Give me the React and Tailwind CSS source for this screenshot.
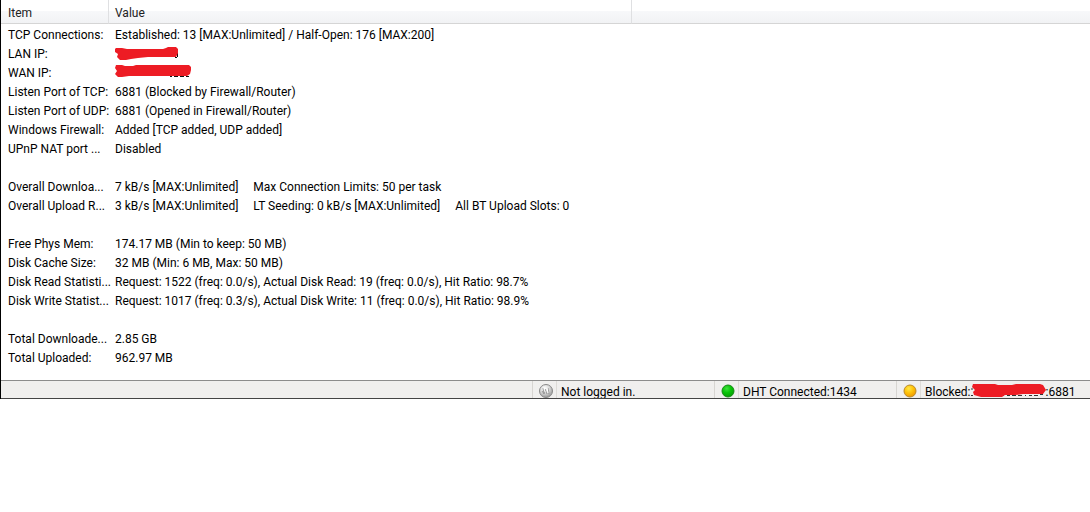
import React from 'react';

// Red marker strokes that cover the addresses
function LanMark() {
  return (
    <svg width="66" height="16" viewBox="0 0 66 16" className="block" role="img" aria-label="hidden address">
      <path d="M62.500 7v4M60 11.500h2" stroke="#111" strokeWidth="1" />
      <path
        d="M1 2h6l5 1h36l3-1 2-1h8l2 2v4l-2 4H33l-10 1-7 1-5 1H5l-3-3 1-3-3-2v-3z"
        fill="#ed1c24"
      />
    </svg>
  );
}

function WanMark() {
  return (
    <svg width="78" height="16" viewBox="0 0 78 16" className="block" role="img" aria-label="hidden address">
      <path d="M55 11.500h2M59 11.500h4M65 11.500h4M71 11.500h3" stroke="#111" strokeWidth="1" />
      <path
        d="M1 0h6l3 1h8l3-1h53l2 2v3l-1 4-3 2H14l-7 1H3l-3-3 2-3-2-3z"
        fill="#ed1c24"
      />
    </svg>
  );
}

function PeerMark() {
  return (
    <svg width="75" height="15" viewBox="0 0 75 15" className="block shrink-0 self-end" role="img" aria-label="hidden address">
      <path
        d="M0 6h2M0 12.500h2M32 12.500h1M36 12.500h3M41 12.500h4M47 12.500h4M54 12.500h1M58 12.500h3M63 12.500h4M69 11.500h3"
        stroke="#333"
        strokeWidth="1"
      />
      <path
        d="M2 1h22l3 1h14l4-1h24l3 1 3 5-3 4H52l-8 1H34l-3 2H10l-7-2-1-3 2-2-3-3z"
        fill="#ed1c24"
      />
    </svg>
  );
}

const groups = [
  [
    ['TCP Connections:', ['Established: 13 [MAX:Unlimited] / Half-Open: 176 [MAX:200]']],
    ['LAN IP:', [<LanMark key="lan" />]],
    ['WAN IP:', [<WanMark key="wan" />]],
    ['Listen Port of TCP:', ['6881 (Blocked by Firewall/Router)']],
    ['Listen Port of UDP:', ['6881 (Opened in Firewall/Router)']],
    ['Windows Firewall:', ['Added [TCP added, UDP added]']],
    ['UPnP NAT port ...', ['Disabled']],
  ],
  [
    ['Overall Downloa...', ['7 kB/s [MAX:Unlimited]', 'Max Connection Limits: 50 per task']],
    ['Overall Upload R...', ['3 kB/s [MAX:Unlimited]', 'LT Seeding: 0 kB/s [MAX:Unlimited]', 'All BT Upload Slots: 0']],
  ],
  [
    ['Free Phys Mem:', ['174.17 MB (Min to keep: 50 MB)']],
    ['Disk Cache Size:', ['32 MB (Min: 6 MB, Max: 50 MB)']],
    ['Disk Read Statisti...', ['Request: 1522 (freq: 0.0/s), Actual Disk Read: 19 (freq: 0.0/s), Hit Ratio: 98.7%']],
    ['Disk Write Statist...', ['Request: 1017 (freq: 0.3/s), Actual Disk Write: 11 (freq: 0.0/s), Hit Ratio: 98.9%']],
  ],
  [
    ['Total Downloade...', ['2.85 GB']],
    ['Total Uploaded:', ['962.97 MB']],
  ],
];

function StatsTable() {
  return (
    <table className="w-full table-fixed border-separate border-spacing-0">
      <colgroup>
        <col className="w-[108px]" />
        <col className="w-[523px]" />
        <col />
      </colgroup>
      <thead>
        <tr className="h-6 bg-linear-to-b from-white from-45% via-[#f7f8fa] via-45% to-[#f1f2f4] text-left text-[#222]">
          <th scope="col" className="border-r border-b border-r-[#dfe0e2] border-b-[#d5d5d5] p-0 pt-[3px] pl-[7px] font-normal">Item</th>
          <th scope="col" className="border-r border-b border-r-[#dfe0e2] border-b-[#d5d5d5] p-0 pt-[3px] pl-[6px] font-normal">Value</th>
          <td className="border-b border-[#d5d5d5]" />
        </tr>
      </thead>
      {groups.map((rows, i) => (
        <tbody key={i}>
          {i > 0 && (
            <tr className="h-[19px]">
              <td colSpan={3} className="p-0" />
            </tr>
          )}
          {rows.map(([label, values]) => (
            <tr key={label} className="h-[19px]">
              <th scope="row" className="p-0 pt-[3px] pl-[7px] text-left font-normal whitespace-nowrap">
                {label}
              </th>
              <td colSpan={2} className="p-0 pt-[3px] pl-[6px] whitespace-nowrap">
                <div className="flex items-center gap-[15px]">
                  {values.map((value, n) => (
                    <span key={n}>{value}</span>
                  ))}
                </div>
              </td>
            </tr>
          ))}
        </tbody>
      ))}
    </table>
  );
}

function StatusLight({ id, radius = 6, light, mid, dark, edge, children }) {
  return (
    <span className="flex w-6 shrink-0 items-end justify-end border-l border-[#d7d5d2] pr-[3px]">
      <svg width="14" height="14" viewBox="0 0 14 14" aria-hidden="true">
        <defs>
          <radialGradient id={id} cx="0.4" cy="0.3" r="0.7">
            <stop offset="0" stopColor={light} />
            <stop offset="0.5" stopColor={mid} />
            <stop offset="1" stopColor={dark} />
          </radialGradient>
        </defs>
        <circle cx="7" cy="7" r={radius} fill={`url(#${id})`} stroke={edge} />
        {children}
      </svg>
    </span>
  );
}

function StatusBar() {
  return (
    <footer className="flex h-[19px] overflow-hidden border-t border-b border-t-[#8c8c8c] border-b-[#444] bg-[#f0efee] leading-[22px]">
      <div className="flex-1" />
      <StatusLight id="account" radius={6.5} light="#ffffff" mid="#dadada" dark="#9c9c9c" edge="#888">
        <path d="M4 4l1 6 1-5 2 5M9 4l1 6M3 7l2 3" stroke="#999" fill="none" />
        <path d="M5 4l1 4M8 4l1 5" stroke="#fff" fill="none" />
      </StatusLight>
      <span className="w-[158px] border-l border-[#dddbd8] pl-1">Not logged in.</span>
      <StatusLight id="dht" light="#3fe03f" mid="#09c509" dark="#07a007" edge="#168a16" />
      <span className="w-[158px] border-l border-[#dddbd8] pl-1">DHT Connected:1434</span>
      <StatusLight id="port" light="#ffe84a" mid="#ffc40a" dark="#f09a00" edge="#b98a2a" />
      <span className="flex w-[170px] border-l border-[#dddbd8] pl-1">
        Blocked:
        <PeerMark />
        :6881
      </span>
    </footer>
  );
}

export default function App() {
  return (
    <main className="border-l border-black bg-white font-[Roboto,'Open_Sans',sans-serif] text-[12px] leading-4 text-black">
      <div className="pb-[14px]">
        <StatsTable />
      </div>
      <StatusBar />
    </main>
  );
}
